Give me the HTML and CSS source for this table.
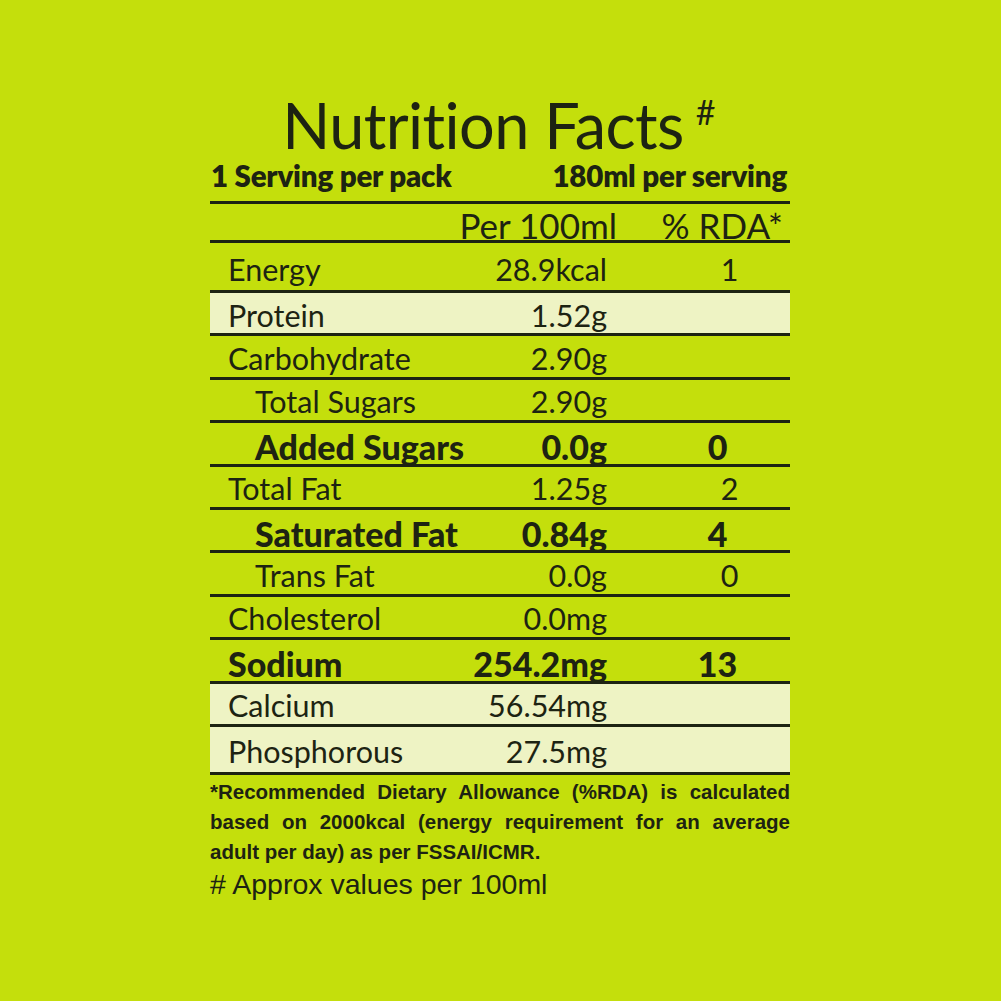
FILE: index.html
```html
<!DOCTYPE html>
<html lang="en">
<head>
<meta charset="utf-8">
<title>Nutrition Facts</title>
<link rel="stylesheet" href="styles.css">
</head>
<body>
<main class="panel">
  <h1 class="title">Nutrition Facts<sup class="hash">#</sup></h1>
  <div class="serving">
    <span>1 Serving per pack</span>
    <span>180ml per serving</span>
  </div>
  <div class="table">
    <div class="row head"><span></span><span class="val">Per 100ml</span><span class="rda">% RDA*</span></div>
    <div class="row energy"><span>Energy</span><span class="val">28.9kcal</span><span class="rda">1</span></div>
    <div class="row hl"><span>Protein</span><span class="val">1.52g</span><span class="rda"></span></div>
    <div class="row"><span>Carbohydrate</span><span class="val">2.90g</span><span class="rda"></span></div>
    <div class="row sub"><span>Total Sugars</span><span class="val">2.90g</span><span class="rda"></span></div>
    <div class="row sub bold"><span>Added Sugars</span><span class="val">0.0g</span><span class="rda">0</span></div>
    <div class="row"><span>Total Fat</span><span class="val">1.25g</span><span class="rda">2</span></div>
    <div class="row sub bold"><span>Saturated Fat</span><span class="val">0.84g</span><span class="rda">4</span></div>
    <div class="row sub"><span>Trans Fat</span><span class="val">0.0g</span><span class="rda">0</span></div>
    <div class="row"><span>Cholesterol</span><span class="val">0.0mg</span><span class="rda"></span></div>
    <div class="row bold"><span>Sodium</span><span class="val">254.2mg</span><span class="rda">13</span></div>
    <div class="row hl"><span>Calcium</span><span class="val">56.54mg</span><span class="rda"></span></div>
    <div class="row hl last"><span>Phosphorous</span><span class="val">27.5mg</span><span class="rda"></span></div>
  </div>
  <p class="note">
    <span class="line">*Recommended Dietary Allowance (%RDA) is calculated</span>
    <span class="line">based on 2000kcal (energy requirement for an average</span>
    <span class="line end">adult per day) as per FSSAI/ICMR.</span>
  </p>
  <p class="approx"># Approx values per 100ml</p>
</main>
</body>
</html>
```

FILE: styles.css
```css
html, body {
  margin: 0;
  padding: 0;
  background: #c4df0c;
}
body {
  width: 1001px;
  height: 1001px;
  color: #1d2312;
  font-family: Lato, "Open Sans", sans-serif;
}
.panel {
  width: 580px;
  margin: 0 0 0 210px;
  padding-top: 96px;
}
.title {
  margin: 0;
  font-weight: 400;
  font-size: 63px;
  line-height: 58px;
  text-align: center;
  letter-spacing: -0.6px;
  padding-right: 3px;
  white-space: nowrap;
}
.hash {
  font-size: 34px;
  line-height: 0;
  vertical-align: 0;
  position: relative;
  top: -24px;
  margin-left: 12px;
}
.serving {
  display: flex;
  justify-content: space-between;
  font-weight: 800;
  font-size: 29.5px;
  line-height: 44px;
  padding: 0 3px 0 1px;
  letter-spacing: -0.2px;
  white-space: nowrap;
}
.table {
  margin-top: 3px;
  border-top: 3px solid #1d2312;
}
.row {
  display: grid;
  grid-template-columns: 227px 152px 1fr;
  align-items: center;
  height: 43.4px;
  box-sizing: border-box;
  border-bottom: 3px solid #1d2312;
  font-size: 30.5px;
  padding-left: 18px;
  padding-top: 3px;
  white-space: nowrap;
}
.row .val { text-align: right; }
.row .rda { text-align: center; padding-left: 62px; }
.row.head { height: 39px; font-size: 35px; padding-top: 0; }
.row.head .val { margin-right: -10px; }
.row.head .rda { text-align: right; padding-left: 0; padding-right: 7px; }
.row.energy { height: 50px; padding-top: 4px; }
.row.last { height: 48px; }
.row.hl { background: #eef3c4; }
.row.sub { padding-left: 45px; grid-template-columns: 200px 152px 1fr; }
.row.bold { font-weight: 900; font-size: 34px; }
.row.bold .rda { padding-left: 38px; }
.note {
  margin: 2px 0 0;
  font-family: "Liberation Sans", Arial, sans-serif;
  font-weight: 700;
  font-size: 20.5px;
  line-height: 30px;
}
.note .line {
  display: block;
  white-space: nowrap;
  text-align: justify;
  text-align-last: justify;
}
.note .line.end {
  text-align-last: left;
}
.approx {
  margin: 2px 0 0;
  font-family: "Liberation Sans", Arial, sans-serif;
  font-size: 28.5px;
  line-height: 30px;
}
```
